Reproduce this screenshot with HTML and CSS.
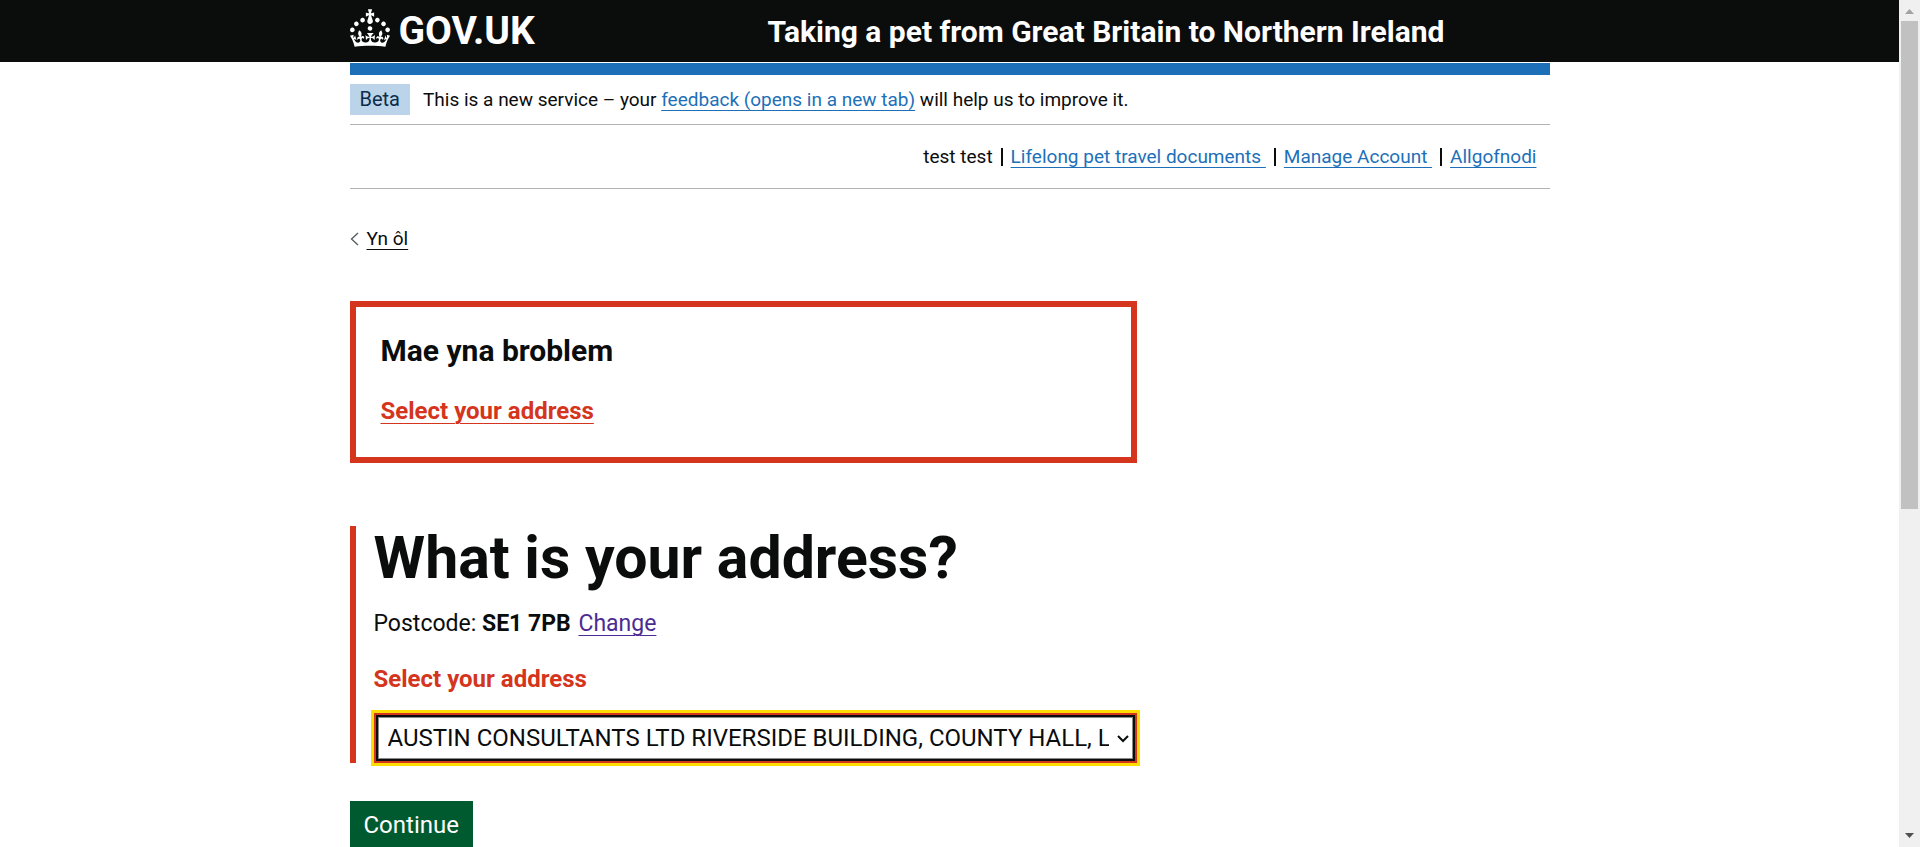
FILE: index.html
```html
<!DOCTYPE html>
<html lang="cy">
<head>
<meta charset="utf-8">
<title>What is your address?</title>
<link rel="stylesheet" href="styles.css">
</head>
<body>
<div class="viewport">
  <div class="page">
    <header class="header">
      <div class="container header-row">
        <a class="logo" href="#">
          <svg class="crown" viewBox="0 0 32 30" aria-hidden="true"><path fill="currentColor" d="M22.6 10.4c-1 .4-2-.1-2.4-1-.4-.9.1-2 1-2.4.9-.4 2 .1 2.4 1s-.1 2-1 2.4m-5.9 6.7c-.9.4-2-.1-2.4-1-.4-.9.1-2 1-2.4.9-.4 2 .1 2.4 1s-.1 2-1 2.4m10.8-3.7c-1 .4-2-.1-2.4-1-.4-.9.1-2 1-2.4.9-.4 2 .1 2.4 1s0 2-1 2.4m3.3 4.8c-1 .4-2-.1-2.4-1-.4-.9.1-2 1-2.4.9-.4 2 .1 2.4 1s-.1 2-1 2.4M17 4.7l2.3 1.2V2.5l-2.3.7-.2-.2.9-3h-3.4l.9 3-.2.2c-.1.1-2.3-.7-2.3-.7v3.4L15 4.7c.1.1.1.2.2.2l-1.3 4c-.1.2-.1.4-.1.6 0 1.1.8 2 1.9 2.2h.7c1-.2 1.9-1.1 1.9-2.1 0-.2 0-.4-.1-.6l-1.3-4c-.1-.2 0-.2.1-.3m-7.6 5.7c.9.4 2-.1 2.4-1 .4-.9-.1-2-1-2.4-.9-.4-2 .1-2.4 1s0 2 1 2.4m-5 3c.9.4 2-.1 2.4-1 .4-.9-.1-2-1-2.4-.9-.4-2 .1-2.4 1s.1 2 1 2.4m-3.2 4.8c.9.4 2-.1 2.4-1 .4-.9-.1-2-1-2.4-.9-.4-2 .1-2.4 1s0 2 1 2.4m14.8 11c4.4 0 8.6.3 12.3.8 1.1-4.5 2.4-7 3.7-8.8l-2.5-.9c.2 1.3.3 1.9 0 2.7-.4-.4-.8-1.1-1.1-2.3l-1.2 4c.7-.5 1.3-.8 2-.9-1.1 2.5-2.6 3.1-3.5 3-1.1-.2-1.7-1.2-1.5-2.1.3-1.2 1.5-1.5 2.1-.1 1.1-2.3-.8-3-2-2.3 1.9-1.9 2.1-3.5.6-5.6-2.1 1.6-2.1 3.2-1.2 5.5-1.2-1.4-3.2-.6-2.5 1.6.9-1.4 2.1-.5 1.9.8-.2 1.1-1.7 2.1-3.5 1.9-2.7-.2-2.9-2.1-2.9-3.6.7-.1 1.9.5 2.9 1.9l.4-4.3c-1.1 1.1-2.1 1.4-3.2 1.4.4-1.2 2.1-3 2.1-3h-5.4s1.7 1.9 2.1 3c-1.1 0-2.1-.2-3.2-1.4l.4 4.3c1-1.4 2.2-2 2.9-1.9-.1 1.5-.2 3.4-2.9 3.6-1.9.2-3.4-.8-3.5-1.9-.2-1.3 1-2.2 1.9-.8.7-2.3-1.2-3-2.5-1.6.9-2.2.9-3.9-1.2-5.5-1.5 2-1.3 3.7.6 5.6-1.2-.7-3.1 0-2 2.3.6-1.4 1.8-1.1 2.1.1.2.9-.3 1.9-1.5 2.1-.9.2-2.4-.5-3.5-3 .6 0 1.2.3 2 .9l-1.2-4c-.3 1.1-.7 1.9-1.1 2.3-.3-.8-.2-1.4 0-2.7l-2.9.9C1.3 23 2.6 25.5 3.7 30c3.7-.5 7.9-.8 12.3-.8"/></svg>
          <span>GOV.UK</span>
        </a>
        <a class="service-name" href="#">Taking a pet from Great Britain to Northern Ireland</a>
      </div>
    </header>
    <div class="container">
      <div class="phase-banner">
        <strong class="tag">Beta</strong>
        <span>This is a new service – your <a class="link" href="#">feedback (opens in a new tab)</a> will help us to improve it.</span>
      </div>
      <nav class="account-nav" aria-label="Account">
        <span>test test</span><span class="bar"></span>
        <a class="link" href="#">Lifelong pet travel documents&nbsp;</a><span class="bar"></span>
        <a class="link" href="#">Manage Account&nbsp;</a><span class="bar"></span>
        <a class="link" href="#">Allgofnodi</a>
      </nav>
      <div class="back">
        <svg class="chevron" viewBox="0 0 9 14" aria-hidden="true"><path d="M8 1 L1.500 7 L8 13" fill="none" stroke="#505a5f" stroke-width="1.300"/></svg>
        <a class="link link-black" href="#">Yn ôl</a>
      </div>
      <main class="main">
        <section class="error-summary">
          <h2 class="error-title">Mae yna broblem</h2>
          <a class="link link-error" href="#address">Select your address</a>
        </section>
        <form class="form">
          <div class="form-group">
            <h1 class="title">What is your address?</h1>
            <p class="postcode">Postcode: <b>SE1 7PB</b> <a class="link link-visited" href="#">Change</a></p>
            <label class="label" for="address">Select your address</label>
            <div class="select-wrap">
              <select class="select" id="address">
                <option>AUSTIN CONSULTANTS LTD RIVERSIDE BUILDING, COUNTY HALL, LONDON, SE1 7PB</option>
              </select>
              <svg class="select-arrow" viewBox="0 0 12 8" aria-hidden="true"><path d="M1 1 L6 6 L11 1" fill="none" stroke="#0b0c0c" stroke-width="2"/></svg>
            </div>
          </div>
          <button class="button" type="button">Continue</button>
        </form>
      </main>
    </div>
  </div>
  <div class="scrollbar" aria-hidden="true">
    <svg class="arrow" viewBox="0 0 9 5"><path d="M0 5 L4.500 0 L9 5 Z" fill="#a3a3a3"/></svg>
    <div class="track"><div class="thumb"></div></div>
    <svg class="arrow" viewBox="0 0 9 5"><path d="M0 0 L4.500 5 L9 0 Z" fill="#505050"/></svg>
  </div>
</div>
</body>
</html>
```
FILE: styles.css
```css
* { box-sizing: border-box; }

body {
  margin: 0;
  font-family: Roboto, "Liberation Sans", sans-serif;
  font-size: 19px;
  line-height: 25px;
  color: #0b0c0c;
  background: #fff;
}

.viewport {
  display: grid;
  grid-template-columns: minmax(0, 1fr) 21px;
  height: 100vh;
  overflow: hidden;
}

.page { overflow: hidden; }

.container {
  max-width: 1200px;
  margin: 0 auto;
}

.header { background: #0b0c0c; margin-bottom: 1px; }

.header-row {
  display: grid;
  grid-template-columns: 418px 1fr;
  align-items: center;
  height: 62px;
}

.logo, .service-name {
  color: #fff;
  font-weight: 700;
  text-decoration: none;
}

.logo {
  display: flex;
  align-items: center;
  gap: 9px;
  font-size: 39px;
  line-height: 40px;
}

.crown { width: 40px; height: 38px; margin-bottom: 6px; }

.service-name { padding-top: 2px; font-size: 30px; line-height: 38px; }

.phase-banner {
  display: flex;
  align-items: center;
  gap: 13px;
  padding: 9px 0;
  border-top: 12px solid #1d70b8;
  border-bottom: 1px solid #b1b4b6;
}

.tag {
  padding: 3px 10px;
  font-size: 20px;
  font-weight: 400;
  color: #0c2d4a;
  background: #bbd4ea;
}

.link {
  color: #1d70b8;
  text-decoration: underline;
  text-decoration-thickness: 1px;
  text-underline-offset: 4px;
}

.link-black { color: #0b0c0c; }
.link-visited { color: #4c2c92; }
.link-error { color: #d4351c; font-weight: 700; }

.account-nav {
  display: flex;
  justify-content: flex-end;
  align-items: center;
  padding: 19px 13px 19px 0;
  border-bottom: 1px solid #b1b4b6;
}

.bar {
  width: 2px;
  height: 18px;
  margin: 0 8px;
  background: #0b0c0c;
}

.back {
  display: flex;
  align-items: center;
  gap: 8px;
  margin: 37px 0 50px;
}

.chevron { width: 9px; height: 14px; }

.main { max-width: 787px; font-size: 24px; line-height: 31px; }

.error-summary {
  padding: 25px 25px 30px;
  border: 6px solid #d4351c;
}

.error-title {
  margin: 0 0 26px;
  font-size: 30px;
  line-height: 38px;
}

.form { margin-top: 63px; }

.form-group {
  padding-left: 18px;
  border-left: 6px solid #d4351c;
}

.title {
  margin: 0 0 19px;
  font-size: 59px;
  line-height: 63px;
}

.postcode { margin: 0 0 25px; font-size: 23px; }
.postcode .link { margin-left: 2px; }

.label {
  display: block;
  margin-bottom: 18px;
  font-weight: 700;
  color: #d4351c;
}

.select-wrap { position: relative; }

.select {
  display: block;
  width: 100%;
  height: 50px;
  padding: 5px 26px 5px 12px;
  appearance: none;
  border: 2px solid #d4351c;
  border-radius: 0;
  outline: 3px solid #fd0;
  box-shadow: inset 0 0 0 2px #0b0c0c, inset 0 0 0 3px #8a8a8a;
  font: inherit;
  color: #0b0c0c;
  background: #fff;
}

.select-arrow {
  position: absolute;
  top: 22px;
  right: 8px;
  width: 12px;
  height: 8px;
  pointer-events: none;
}

.button {
  margin-top: 38px;
  padding: 9px 14px 11px;
  border: 0;
  font: inherit;
  color: #fff;
  background: #005a30;
}

.scrollbar {
  display: flex;
  flex-direction: column;
  align-items: center;
  padding: 9px 2px 9px;
  background: #f0f0f0;
}

.arrow { flex: none; width: 9px; height: 5px; }

.track {
  flex: 1;
  width: 100%;
  margin: 7px 0;
}

.thumb {
  height: 488px;
  background: #c1c1c1;
}
```
